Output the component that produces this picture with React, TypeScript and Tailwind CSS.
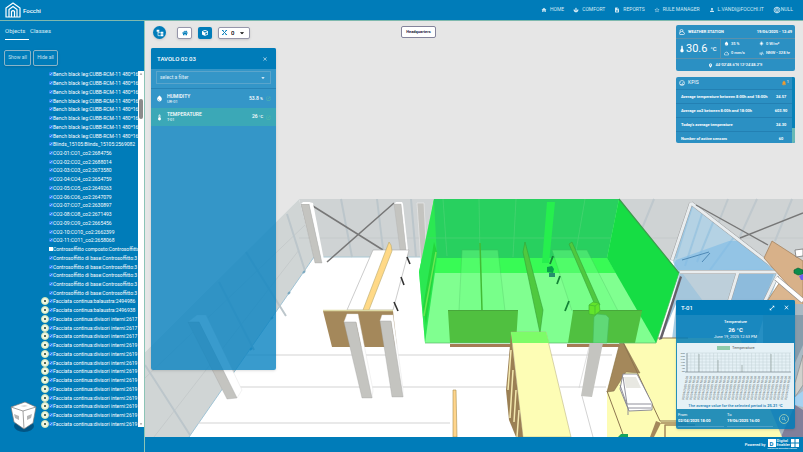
import React from 'react';
import clsx from 'clsx';
import {
  MdArrowDropDown,
  MdClose,
  MdDescription,
  MdHome,
  MdLanguage,
  MdLocationOn,
  MdNotifications,
  MdOpenInFull,
  MdOpenInNew,
  MdPerson,
  MdSearch,
  MdSpa,
  MdStarOutline,
  MdThermostat,
  MdWaterDrop,
  MdWbSunny,
  MdAir,
  MdOutlineCloud,
} from 'react-icons/md';
import { FaCube, FaHome } from 'react-icons/fa';

type TreeItem = {
  name: string;
  checked?: boolean;
  expandable?: boolean;
};

const repeat = (count: number, item: TreeItem) => Array.from({ length: count }, () => item);

const treeItems: TreeItem[] = [
  ...repeat(8, { name: 'Bench black leg:CUBB-RCM-11 480*160', checked: true }),
  { name: 'Blinds_15105:Blinds_15105:2569082', checked: true },
  { name: 'CO2-01:CO1_co2:2684756', checked: true },
  { name: 'CO2-02:CO2_co2:2688014', checked: true },
  { name: 'CO2-03:CO3_co2:2673580', checked: true },
  { name: 'CO2-04:CO4_co2:2654759', checked: true },
  { name: 'CO2-05:CO5_co2:2649263', checked: true },
  { name: 'CO2-06:CO6_co2:2647079', checked: true },
  { name: 'CO2-07:CO7_co2:2630897', checked: true },
  { name: 'CO2-08:CO8_co2:2671493', checked: true },
  { name: 'CO2-09:CO9_co2:2665456', checked: true },
  { name: 'CO2-10:CO10_co2:2662399', checked: true },
  { name: 'CO2-11:CO11_co2:2658068', checked: true },
  { name: 'Controsoffitto composto:Controsoffitto' },
  ...repeat(5, { name: 'Controsoffitto di base:Controsoffitto:3', checked: true }),
  { name: 'Facciata continua:balaustra:2494986', checked: true, expandable: true },
  { name: 'Facciata continua:balaustra:2496938', checked: true, expandable: true },
  ...repeat(3, { name: 'Facciata continua:divisori interni:2617', checked: true, expandable: true }),
  ...repeat(10, { name: 'Facciata continua:divisori interni:2619', checked: true, expandable: true }),
];

const navItems = [
  { label: 'HOME', icon: MdHome },
  { label: 'COMFORT', icon: MdSpa },
  { label: 'REPORTS', icon: MdDescription },
  { label: 'RULE MANAGER', icon: MdStarOutline },
  { label: 'L.VANDI@FOCCHI.IT', icon: MdPerson },
];

const kpis = [
  { label: 'Average temperature between 8:00h and 18:00h', value: '24.57' },
  { label: 'Average co2 between 8:00h and 18:00h', value: '603.90' },
  { label: "Today's average temperature", value: '24.30' },
  { label: 'Number of active sensors', value: '60' },
];

const FocchiLogo = () => (
  <svg viewBox="0 0 32 32" className="size-4" fill="none" stroke="#fff" strokeWidth="2.4" strokeLinejoin="round">
    <path d="M2 12 16 2l14 10v18H2z" />
    <path d="M8 30V15l8-6 8 6v15" />
    <path d="M13 30V19q3-3.500 6 0v11" />
  </svg>
);

const Header = () => (
  <header className="flex h-[21px] shrink-0 items-center border-b border-[#7fb9ae] bg-[#007cb9] pl-[5px] pr-2.5 text-white">
    <a href="#home" className="flex items-center gap-0.5 text-[6px] font-medium">
      <FocchiLogo />
      Focchi
    </a>
    <nav className="ml-auto flex items-center gap-[9px] text-[5px] text-[#d3e9f4]">
      {navItems.map(({ label, icon: Icon }) => (
        <a key={label} href="#nav" className="flex items-center gap-[3px]">
          <Icon className="size-[6px]" />
          {label}
        </a>
      ))}
      <a href="#language" className="flex items-center">
        <MdLanguage className="size-2" />
        NULL
      </a>
    </nav>
  </header>
);

const ViewCube = () => (
  <svg viewBox="0 0 28 31" className="absolute bottom-5 left-2.5 h-[31px] w-7">
    <ellipse cx="14" cy="25" rx="10" ry="6" fill="#005585" />
    <path d="M1 6 15 1l11 5-3 16-9 6-10-7z" fill="#fff" />
    <path d="M1 6l12 4 13-4M13 10l1 18M1 6 15 1l11 5-3 16-9 6-10-7z" fill="none" stroke="#777" strokeWidth=".7" />
    <path d="M4 13l5 2v4l-4-2zM17 15l5-2-1 4-4 2z" fill="#b5b5b5" />
    <path d="M10 5l5-1 3 1-4 1z" fill="#d8d8d8" />
  </svg>
);

const TreeRow = ({ item }: { item: TreeItem }) => (
  <li className="flex min-h-0 flex-1 items-center">
    <span className="flex w-2 shrink-0 justify-center">
      {item.expandable && (
        <button
          type="button"
          aria-label="Expand"
          className="flex size-2 items-center justify-center rounded-full border border-[#c9e3b9] bg-[#f3f8e4]"
        >
          <span className="size-0.5 rounded-full bg-[#223c2b]" />
        </button>
      )}
    </span>
    <label className="flex items-center whitespace-nowrap">
      <input
        type="checkbox"
        defaultChecked={item.checked}
        className="size-1 shrink-0 appearance-none bg-white accent-[#1778f2] checked:appearance-auto"
      />
      {item.name}
    </label>
  </li>
);

const Sidebar = () => (
  <aside className="relative flex w-[145px] shrink-0 flex-col border-r border-[#8cc4b6] bg-[#007cb9] pb-6 text-white">
    <div className="flex gap-px px-[5px] pt-1 text-[6px] text-[#d9edf6]">
      <button type="button" className="h-[15px] w-6 border-b border-white pb-1 text-left">Objects</button>
      <button type="button" className="h-[15px] pb-[5px]">Classes</button>
    </div>
    <div className="flex gap-0.5 px-1 pb-1 pt-2.5 text-[5px] text-[#c5e0ee]">
      <button type="button" className="h-4 w-[27px] rounded-xs border border-[#8ab4c8] shadow">Show all</button>
      <button type="button" className="h-4 w-[25px] rounded-xs border border-[#8ab4c8] shadow">Hide all</button>
    </div>
    <div className="flex min-h-0 flex-1">
      <ul className="flex min-w-0 flex-1 flex-col overflow-hidden pl-[41px] text-[5px] leading-[6px]">
        {treeItems.map((item, index) => (
          <TreeRow key={index} item={item} />
        ))}
      </ul>
      <div className="my-px flex w-1.5 flex-col items-center justify-between bg-white text-[#666]">
        <MdArrowDropDown className="size-1.5 rotate-180" />
        <span className="mb-auto mt-[22px] h-5 w-1 rounded-sm bg-[#8b8b8b]" />
        <MdArrowDropDown className="size-1.5" />
      </div>
    </div>
    <ViewCube />
  </aside>
);

// Office floor seen from above the entrance, with the selected room in green
const Scene = () => (
  <svg
    viewBox="145 21 658 416"
    preserveAspectRatio="xMidYMid slice"
    className="absolute inset-0 size-full"
    strokeLinejoin="round"
  >
    <rect x="145" y="21" width="658" height="416" fill="#e6e6e6" />
    <path d="M299 199H803V437H145V352z" fill="#fff" />

    {/* glass walls */}
    <path d="M299 199 145 352v85h44L314 257z" fill="#d0d5d5" />
    <path d="M299 199H803v62H680l-66-4H314z" fill="#cfd3d4" />
    <path d="M314 257H610" stroke="#a9c8d5" strokeWidth="1" />
    <path d="M314 257 189 437" stroke="#9fc3d5" strokeWidth="1" />
    <path d="M299 238H803M305 225 145 378M299 250 154 437" stroke="#c5cacb" fill="none" />
    <path d="M341 199l11 58M377 199l6 50M411 199l5 58M287 214l18 57M246 252l40 64M219 282l35 68M145 365l45 70" stroke="#bcc6cb" strokeWidth="2" fill="none" />
    <path d="M654 199l-13 32M728 199l-16 40M757 199l-20 44M792 199l-17 42" stroke="#bfc8cd" strokeWidth="2" />
    <path d="M305 271l-2 2M290 292l-2 2M273 317l-2 2M252 348l-2 2" stroke="#7aa8c0" strokeWidth="2" />

    {/* floor joints */}
    <path d="M240 355H510M235 387H510M198 423H450M546 355H612M560 387H606M582 396l11 41" stroke="#d3d3d3" fill="none" />

    {/* pillars and braces at the back */}
    <path d="M308 203 383 250M394 203 327 262" stroke="#777" strokeWidth="1.500" />
    <path d="M309 202l4 1 11 57-2 3-13-59z" fill="#fff" />
    <path d="M301 204h8l13 59h-7z" fill="#c4c4c0" stroke="#999" strokeWidth=".3" />
    <path d="M301 204l2-2h7l-1 2z" fill="#fff" />
    <path d="M394 204l2-2h6l1 2 5 46h-2l-5-46z" fill="#fff" />
    <path d="M394 204h7l5 46h-6z" fill="#c4c4c0" stroke="#aaa" strokeWidth=".3" />
    <path d="M417 203h7l3 60h-6z" fill="#c4c4c0" stroke="#eee" strokeWidth=".6" />

    {/* desk on the left */}
    <path d="M373 250h36l-16 60h-46z" fill="#fff" stroke="#aaa" strokeWidth=".6" />
    <path d="M389 242l2 3 1 6-23 59h-6z" fill="#ffd987" stroke="#b9a96d" strokeWidth=".6" />
    <path d="M407 257l3 7M401 277l3 8M394 302l4 9" stroke="#333" strokeWidth="1.600" />
    <path d="M323 311h70l4 36h-65z" fill="#a4885b" />
    <path d="M323 310.500h70" stroke="#ddd9a5" strokeWidth="1.500" />

    {/* front pillars */}
    <path d="M188 322l9-7h9l36 75-5 8-38-76z" fill="#fff" stroke="#ddd" strokeWidth=".4" />
    <path d="M188 322h11l38 76-10 1z" fill="#c4c4c0" stroke="#999" strokeWidth=".3" />
    <path d="M344 322l3-8h11l15 76-1 8-16-76z" fill="#fff" stroke="#ddd" strokeWidth=".4" />
    <path d="M344 322h12l16 76h-10z" fill="#c4c4c0" stroke="#999" strokeWidth=".3" />
    <path d="M380 321l2-6h11l10 74v8l-12-76z" fill="#fff" stroke="#ddd" strokeWidth=".4" />
    <path d="M380 321h11l12 76h-11z" fill="#c4c4c0" stroke="#999" strokeWidth=".3" />

    {/* glass office on the right */}
    <path d="M690 203 780 272 766 310 727 437H660L680 274 673 262z" fill="#a9cfe5" />
    <path d="M694 205 775 269 680 270 674 258z" fill="#b4d2e4" />
    <path d="M676 258l16-52M685 266 702 214M697 262l17-42M710 270l24-33" stroke="#8fbfdf" strokeWidth="2" opacity=".6" />
    <path d="M676 260l53-19 14 0 30 29H672z" fill="#7dbbe6" opacity=".6" />
    <path d="M680 272h95l-10 32H676l-14 33z" fill="#a4c6dc" />
    <path d="M683 274h55l-9 27h-26z" fill="#bdcfda" />
    <path d="M738 273h36l-10 29h-34z" fill="#83b7db" opacity=".7" />
    <path d="M691 203 672 260M691 203 779 271M680 272H779L763 305M738 272l-9 30" stroke="#999" strokeWidth="3.800" fill="none" />
    <path d="M691 203 672 260M691 203 779 271M680 272H779L763 305M738 272l-9 30" stroke="#e9edef" strokeWidth="2.900" fill="none" />
    <path d="M696 205 768 245M740 238 803 213" stroke="#777" strokeWidth="1.400" />
    <path d="M682 260l27-8M702 262l8-9" stroke="#4f89b5" strokeWidth="1" />
    <path d="M772 241 803 261v41l-39-44z" fill="#d8b189" stroke="#9d7b56" strokeWidth=".7" />
    <path d="M780 282l23 20v12h-35l-4-8z" fill="#dbb68f" stroke="#9d7b56" strokeWidth=".7" />
    <path d="M776 278l27 23" stroke="#888" strokeWidth="5" />
    <path d="M776 278l27 23" stroke="#fff" strokeWidth="4" />
    <path d="M795 250l8-1v7l-7 1z" fill="#fff" stroke="#666" strokeWidth=".7" />
    <path d="M794 270l4-2 5 2v4l-5 1-4-2z" fill="#0b8c4d" stroke="#055a2f" strokeWidth=".6" />
    <path d="M799 276l4-2v6h-2z" fill="#6e5cf2" />
    <path d="M763 304h40v133h-40z" fill="#a9b9c3" />
    <path d="M795 315h8v30l-8 18z" fill="#879cab" />
    <path d="M795 383l8-28v30l-8 12z" fill="#d0d0cc" stroke="#777" strokeWidth=".5" />
    <path d="M795 397l8-6v16l-8-2z" fill="#a5d1f1" />
    <path d="M795 405l8 5v27h-22z" fill="#827f9a" />

    {/* meeting desk */}
    <path d="M621 338H740l42 99H607l0-46z" fill="#fdfcb4" />
    <path d="M621 338l19 35-14-1-12 19-7 1z" fill="#a4885b" stroke="#7d6747" strokeWidth=".5" />
    <path d="M620 338h68M621 338l39 83h30M607 391l17 46" stroke="#8d7650" strokeWidth="1" fill="none" />
    <path d="M623 374l14 0 15 29v7l-23 1-9-22z" fill="#fff" stroke="#858590" strokeWidth=".9" />
    <path d="M624 377h12l5 11h-15z" fill="#e8e8e2" />
    <path d="M623 377l4 27h24M620 385l8 23h23M628 408v7" stroke="#858590" fill="none" strokeWidth=".9" />
    <path d="M656 421l5 2-7 14h-4z" fill="#a4885b" />
    <path d="M661 423h26M665 437v-12h30" stroke="#a4885b" strokeWidth="1.500" fill="none" />

    {/* selected room */}
    <path d="M434 199 419 272l6 71H656L679 273 619 199z" fill="#80ff90" />
    <path d="M434 199H619l-12 59H425z" fill="#28d05f" />
    <path d="M422 258H607l9 15H419z" fill="#38fb55" />
    <path d="M434 199 419 272l6 71 12-85z" fill="#2be852" />
    <path d="M619 199l60 74-23 70-49-85z" fill="#16dd44" />
    <path d="M619 199l60 74" stroke="#3d9b4d" strokeWidth="1.200" />
    <path d="M427 238H611M443 199l4 57M479 199l1 58M516 199l-3 58M585 199l-10 58" stroke="#46d371" strokeWidth=".8" fill="none" />
    <path d="M462 250h36l7 61h-46z" fill="#6fff83" opacity=".45" stroke="#45b85c" strokeWidth=".6" />
    <path d="M552 250h35l31 61h-46z" fill="#6fff83" opacity=".45" stroke="#45b85c" strokeWidth=".6" />
    <path d="M547 202h8l-6 61h-7z" fill="#26ef4e" />
    <path d="M434 242l3 10-11 73-3-18z" fill="#23d63c" />
    <path d="M436 252l-12 64" stroke="#6ae852" strokeWidth="1.500" />
    <path d="M480 243l2 67" stroke="#42bb34" strokeWidth="1.500" />
    <path d="M523 252l2-10 18 68-3 23z" fill="#4fc93f" stroke="#36a338" strokeWidth=".6" />
    <path d="M569 244l3-2 28 63h-5z" fill="#4fc93f" stroke="#36a338" strokeWidth=".6" />
    <path d="M448 311h70l-2 32h-66zM573 311h69l-7 32h-67z" fill="#50c040" />
    <path d="M448 310.500h70M573 310.500h69" stroke="#48a83b" />
    <path d="M450 344h62v3h-62zM567 344h52v3h-52z" fill="#a57c55" />
    <path d="M553 256l-3 8M560 276l-3 8M569 301l-4 10" stroke="#148437" strokeWidth="1.800" />
    <path d="M547 267l5-1 2 3-1 4-6-1z" fill="#09a04c" />
    <path d="M549 273h6v4h-6z" fill="#268e6d" />
    <path d="M589 305l4-3 6 1 1 8-5 4-6-1z" fill="#62e52b" stroke="#42b832" strokeWidth=".7" />
    <path d="M589 305l6 1v9M595 306l4-3" stroke="#42b832" strokeWidth=".7" fill="none" />
    <path d="M425 343H656L679 273" fill="none" stroke="#59b96c" strokeWidth=".7" />
    <path d="M680 276l-21 64 3-1 20-62z" fill="#665f68" />

    <path d="M594 317l3-3 9 1 3 3-2 25H593z" fill="#60d977" stroke="#45b85c" strokeWidth=".5" />
    <path d="M596 343h7l-11 54-11-1 9-53z" fill="#c4c4c0" />
    <path d="M590 343l-11 45" stroke="#ccc" strokeWidth=".6" />

    {/* cabinet and low partition */}
    <path d="M511 332h35l25 105h-48z" fill="#fdfdb5" stroke="#b3a878" strokeWidth=".5" />
    <path d="M511 332h35l3 11h-37z" fill="#7dfc68" />
    <path d="M511 334l12 103h-7l-7-17-3-30z" fill="#9b8054" />
    <path d="M511 350l-3 40M513 370l-3 48M516 390l-2 32M519 410l-2 27" stroke="#f3e8af" strokeWidth="1.500" />
    <path d="M453 390h3l1 47h-4z" fill="#ffd58c" stroke="#a88f4e" strokeWidth=".6" />
    <path d="M618 437l3-3h7v3z" fill="#16a45d" />
  </svg>
);

const Toolbar = () => (
  <div className="flex h-[13px] items-center">
    <button type="button" aria-label="Object tree" className="flex size-[13px] items-center justify-center rounded-full bg-[#007cb9] shadow">
      <svg viewBox="0 0 12 12" className="size-2" fill="#fff">
        <path d="M1 1h4v3H1zM7 4h4v3H7zM7 8h4v3H7z" />
        <path d="M3 4v6h4M3 5.500h4" fill="none" stroke="#fff" />
      </svg>
    </button>
    <button type="button" aria-label="Home view" className="ml-[11px] flex h-3 w-[15px] items-center justify-center rounded-xs border border-[#9696aa] bg-white text-[#007cb9] shadow">
      <FaHome className="size-1.5" />
    </button>
    <button type="button" aria-label="3D view" className="ml-1.5 flex h-3 w-3.5 items-center justify-center rounded-xs bg-[#007cb9] text-white shadow">
      <FaCube className="size-1.5" />
    </button>
    <div className="relative ml-1.5 flex h-3 w-8 items-center rounded-xs border border-[#9696aa] bg-white pl-[3px] text-black shadow">
      <svg viewBox="0 0 10 10" className="size-[5px]" stroke="#007cb9" strokeWidth="1.800">
        <path d="M1 1l8 8M9 1 1 9M0 1h3M7 9h3M7 1h3M0 9h3" />
      </svg>
      <select aria-label="Floor" className="h-full flex-1 appearance-none bg-transparent pl-1 text-[6px] font-medium">
        <option>0</option>
      </select>
      <MdArrowDropDown className="pointer-events-none absolute right-0.5 size-2.5" />
    </div>
  </div>
);

type ReadingProps = {
  icon: React.ReactNode;
  name: string;
  code: string;
  value: string;
  unit: string;
  active?: boolean;
};

const Reading = ({ icon, name, code, value, unit, active }: ReadingProps) => (
  <li
    className={clsx(
      'flex items-center px-[5px] text-white',
      active ? 'h-[18px] bg-[#3ba8b7]' : 'h-5 border-t border-[#2683b6]'
    )}
  >
    {icon}
    <div className="ml-1 text-[4px] leading-[5px]">
      <p className="text-[5px] font-medium">{name}</p>
      <p>{code}</p>
    </div>
    <p className="ml-auto text-[5px] font-medium">
      {value} <span className="text-[4px]">{unit}</span>
    </p>
    <MdOpenInNew className="ml-[3px] size-[5px] text-[#55bda5]" />
  </li>
);

const RoomPanel = () => (
  <section className="flex h-[322px] flex-col rounded-xs bg-[#0782c0]/80 text-white shadow-sm">
    <header className="flex h-[21px] items-center justify-between rounded-t-xs bg-[#007cb9] pl-1.5 pr-2">
      <h2 className="text-[6px] font-medium">TAVOLO 02 03</h2>
      <button type="button" aria-label="Close panel">
        <MdClose className="size-1.5" />
      </button>
    </header>
    <div className="relative mx-[5px] mb-1 mt-0.5 flex h-[13px] items-center">
      <select aria-label="Filter" className="h-full flex-1 appearance-none border border-[#5aa5cc] bg-transparent pl-[3px] text-[5px] text-[#e2f1f8]">
        <option>select a filter</option>
      </select>
      <MdArrowDropDown className="pointer-events-none absolute right-1 size-2" />
    </div>
    <ul>
      <Reading icon={<MdWaterDrop className="size-[7px]" />} name="HUMIDITY" code="UR-01" value="53.8" unit="%" />
      <Reading icon={<MdThermostat className="size-[7px]" />} name="TEMPERATURE" code="T-01" value="26" unit="°C" active />
    </ul>
  </section>
);

const WeatherPanel = () => (
  <section className="rounded-xs bg-[#2b90c3] text-[4px] text-white">
    <header className="flex h-[14px] items-center gap-[3px] border-b border-[#5b91ad] px-[3px] font-bold">
      <svg viewBox="0 0 12 12" className="size-1.5" fill="none" stroke="#fff" strokeWidth="1.400">
        <circle cx="5" cy="4" r="3" />
        <path d="M2 11h7a2 2 0 0 0 0-4 3 3 0 0 0-5.500-.5A2.300 2.300 0 0 0 2 11z" fill="#2b90c3" />
      </svg>
      <h2>WEATHER STATION</h2>
      <time className="ml-auto">19/06/2025 - 12:49</time>
    </header>
    <div className="flex h-5 items-center border-b border-[#5b91ad]">
      <MdThermostat className="ml-0.5 size-2" />
      <p className="flex w-[34px] items-center gap-[3px] text-[11px] leading-none">
        30.6 <span className="text-[6px] font-medium">°C</span>
      </p>
      <dl className="grid h-full flex-1 grid-cols-[35px_1fr] items-center border-l border-[#5b91ad] pl-[3px] font-medium">
        <dd className="flex items-center gap-0.5"><MdWaterDrop className="size-[5px]" />35 %</dd>
        <dd className="flex items-center gap-0.5"><MdWbSunny className="size-[5px]" />0 W/m²</dd>
        <dd className="flex items-center gap-0.5"><MdOutlineCloud className="size-[5px]" />0 mm/s</dd>
        <dd className="flex items-center gap-0.5"><MdAir className="size-[5px]" />NNW • 328 hr</dd>
      </dl>
    </div>
    <p className="flex h-3 items-center justify-center gap-0.5 font-medium">
      <MdLocationOn className="size-[5px]" />
      44°02'48.6"N 12°24'48.2"E
    </p>
  </section>
);

const KpiPanel = () => (
  <section className="flex h-[66px] overflow-hidden rounded-xs bg-[#2b90c3] text-[4px] text-white">
    <div className="flex-1">
      <header className="flex h-3 items-center gap-[3px] px-[3px] text-[5px]">
        <svg viewBox="0 0 12 12" className="size-1.5" fill="none" stroke="#fff" strokeWidth="1.200">
          <circle cx="6" cy="6" r="5" />
          <path d="M2 9h8M6 8l3-4M3 5l1 1" />
        </svg>
        <h2>KPIS</h2>
        <div className="ml-auto flex">
          <MdNotifications className="size-1.5 text-[#f19a2d]" />
          <span className="text-[4px] leading-[4px]">1</span>
        </div>
      </header>
      <table className="w-full font-bold">
        <tbody>
          {kpis.map((kpi) => (
            <tr key={kpi.label} className="h-[14px] border-t border-[#2380b3]">
              <td className="pl-[5px]">{kpi.label}</td>
              <td className="pr-1 text-center">{kpi.value}</td>
            </tr>
          ))}
        </tbody>
      </table>
    </div>
    <div className="flex w-[3px] flex-col justify-end bg-[#0781b7]">
      <span className="h-[15px] bg-[#68b9b6]" />
    </div>
  </section>
);

const TemperatureChart = () => {
  const labels = Array.from({ length: 28 }, (_, i) => i);
  const spikes = [
    [22, 11],
    [41, 17],
    [65, 22],
    [94, 11],
  ];

  return (
    <svg viewBox="0 0 117 60" className="block w-full" fontFamily="Roboto, sans-serif">
      <rect x="40" y="3" width="13" height="4" fill="#8fcbaa" />
      <text x="55" y="6" fontSize="4" fill="#555">Temperature</text>
      <g stroke="#c3d1d7" strokeWidth=".5">
        {labels.map((i) => (
          <path key={i} d={`M${10 + i * 3.8} 10v19`} />
        ))}
        <path d="M10 10h104M10 13h104M10 16h104M10 19h104M10 22h104M10 25h104" />
      </g>
      <path d="M8 29h106M10 10v19" stroke="#73818a" strokeWidth=".7" />
      {spikes.map(([x, y]) => (
        <path key={x} d={`M${x} ${y}V29`} stroke="#83908f" strokeWidth=".6" />
      ))}
      {[10, 13, 16, 19, 22, 25, 28].map((y) => (
        <text key={y} x="8" y={y + 1} fontSize="2" fill="#566" textAnchor="end">{3000 - (y - 10) * 150}</text>
      ))}
      {labels.map((i) => (
        <text key={i} fontSize="3" fill="#566" transform={`translate(${7 + i * 3.8} 57) rotate(-80)`}>
          02/04/2025 18:00
        </text>
      ))}
    </svg>
  );
};

const SensorPanel = () => (
  <section className="rounded-xs bg-[#007cb9]/85 text-white shadow-sm">
    <header className="flex h-[15px] items-center rounded-t-xs bg-[#007cb9] pl-[5px] pr-[5px]">
      <h2 className="text-[6px] font-medium">T-01</h2>
      <button type="button" aria-label="Enlarge" className="ml-auto">
        <MdOpenInFull className="size-1.5" />
      </button>
      <button type="button" aria-label="Close" className="ml-2">
        <MdClose className="size-[7px]" />
      </button>
    </header>
    <div className="flex h-7 flex-col items-center justify-center text-[4px] leading-[6px]">
      <p className="font-medium">Temperature</p>
      <p className="text-[6px] font-bold leading-[9px]">26 °C</p>
      <p>June 19, 2025 12:53 PM</p>
    </div>
    <div className="mx-px bg-[#e5f1f6] text-center text-[4px] leading-[6px] text-[#2484b8]">
      <TemperatureChart />
      <p className="font-medium">The average value for the selected period is <b>25.21 °C</b></p>
    </div>
    <form className="flex h-5 items-center gap-[3px] pl-0.5 pr-1.5 text-[4px] leading-[6px]">
      <label className="w-[46px]">
        From
        <input className="block w-full border-b border-[#4fa2ca] bg-transparent pb-0.5 font-bold" defaultValue="02/04/2025 18:00" />
      </label>
      <label className="w-[46px]">
        To
        <input className="block w-full border-b border-[#4fa2ca] bg-transparent pb-0.5 font-bold" defaultValue="19/06/2025 16:00" />
      </label>
      <button type="button" aria-label="Search" className="ml-auto flex size-2.5 items-center justify-center rounded-full border border-[#8cc4b6] text-[#b8ddd0]">
        <MdSearch className="size-1.5" />
      </button>
    </form>
  </section>
);

const Footer = () => (
  <footer className="flex h-[15px] shrink-0 items-center justify-end gap-0.5 bg-[#007cb9] pr-1 text-[4px] font-medium text-white">
    Powered by
    <div>
      <div className="flex items-center gap-px">
        <span className="flex size-2 items-center justify-center bg-white text-[6px] font-bold text-[#007cb9]">D</span>
        <span className="text-[4px] leading-[4px]">
          Digital
          <br />
          Enabler
        </span>
        <svg viewBox="0 0 8 8" className="size-2" fill="#fff">
          <path d="M0 0h3.500v3.500H0zM4.500 0H8v3.500H4.500zM0 4.500h3.500V8H0zM4.500 4.500H8V8H4.500z" />
        </svg>
      </div>
      <p className="text-[2px] leading-[3px]">Engineering Ecosystem Platform</p>
    </div>
  </footer>
);

export default function App() {
  return (
    <div className="flex h-screen flex-col overflow-hidden bg-[#007cb9] font-['Roboto',sans-serif] leading-normal">
      <Header />
      <div className="flex min-h-0 flex-1">
        <Sidebar />
        <div className="flex min-w-0 flex-1 flex-col">
          <main className="relative min-h-0 flex-1">
            <Scene />
            <div className="relative flex h-full items-start pb-2 pl-1.5 pr-2 pt-1">
              <div className="flex w-[125px] flex-col gap-[9px]">
                <div className="pl-0.5 pt-px">
                  <Toolbar />
                </div>
                <RoomPanel />
              </div>
              <button type="button" className="ml-[125px] mt-px flex h-3 w-[35px] items-center justify-center rounded-xs border border-[#83839b] bg-white text-[4px] font-bold text-[#222244]">
                Headquarters
              </button>
              <div className="ml-auto flex h-full w-[119px] flex-col gap-1.5">
                <WeatherPanel />
                <KpiPanel />
                <div className="mt-auto">
                  <SensorPanel />
                </div>
              </div>
            </div>
          </main>
          <Footer />
        </div>
      </div>
    </div>
  );
}
